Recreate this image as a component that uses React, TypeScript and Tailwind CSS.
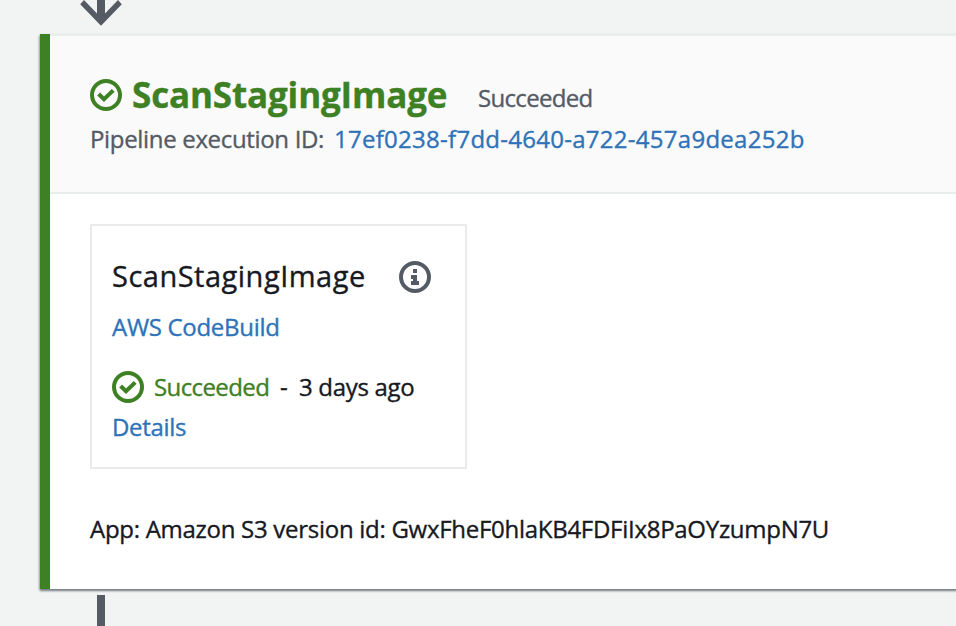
function CheckCircle() {
  return (
    <svg className="h-8 w-8 shrink-0" viewBox="0 0 32 32" fill="none" stroke="#3e8024" strokeWidth="4">
      <circle cx="16" cy="16" r="14" />
      <path d="M8.6 15l5.4 5.3 9.2-8.9" />
    </svg>
  );
}

function InfoCircle() {
  return (
    <svg className="h-8 w-8 shrink-0" viewBox="0 0 32 32">
      <circle cx="16" cy="16" r="14" fill="none" stroke="#545b64" strokeWidth="4" />
      <path d="M14 8h4v4h-4zM12 14h6v6h2v4h-8v-4h2v-2h-2z" fill="#545b64" />
    </svg>
  );
}

function StageHeader() {
  return (
    <header className="h-40 border-y-2 border-[#eaeded] bg-[#fafafa] pt-[37px] pl-10">
      <div className="flex h-11 items-center">
        <CheckCircle />
        <h2 className="ml-2.5 w-[346px] text-[35px] leading-[44px] font-bold tracking-[-0.15px] text-[#3e8024]">
          ScanStagingImage
        </h2>
        <span className="mt-1.5 text-2xl leading-10 tracking-[-0.68px] text-[#545b64]">Succeeded</span>
      </div>
      <div className="mt-0.5 flex text-2xl leading-10">
        <span className="w-[244px] tracking-[-0.33px] text-[#545b64]">Pipeline execution ID:</span>
        <a className="tracking-[0.27px] text-[#2e73b8]">17ef0238-f7dd-4640-a722-457a9dea252b</a>
      </div>
    </header>
  );
}

function ActionCard() {
  return (
    <section className="h-[245px] w-[377px] border-2 border-[#eaeaea] pt-[31px] pl-5 text-2xl leading-10 tracking-[-0.3px]">
      <div className="flex h-10 items-center">
        <h3 className="w-[287px] pb-0.5 text-[29px] leading-[38px] tracking-[0.5px]">ScanStagingImage</h3>
        <InfoCircle />
      </div>
      <a className="mt-2.5 block text-[#2e73b8]">AWS CodeBuild</a>
      <div className="mt-5 flex items-center">
        <CheckCircle />
        <span className="ml-2.5 w-[126px] tracking-[-0.6px] text-[#3e8024]">Succeeded</span>
        <span className="w-[19px]">-</span>
        <span>3 days ago</span>
      </div>
      <a className="block text-[#2e73b8]">Details</a>
    </section>
  );
}

export default function App() {
  return (
    <main className="flex h-[626px] w-[956px] flex-col overflow-hidden bg-[#f2f3f3] font-['Open_Sans',sans-serif] whitespace-nowrap text-[#16191f] [-webkit-text-stroke:0.35px]">
      <svg className="h-[34px] w-[140px] shrink-0" viewBox="0 0 140 34" fill="#545b64">
        <path d="M97 0h8v13.6L118 0l3.8 4.2L101 25.7 80.2 4.2 84 0 97 13.6z" />
      </svg>
      <div className="ml-10 h-[555px] w-[930px] shrink-0 border-l-10 border-[#3e8024] bg-white shadow-[0_2px_2px_0_#545b64b0,-1px_1px_2px_0_#545b6460]">
        <StageHeader />
        <div className="pt-[30px] pl-10">
          <ActionCard />
          <p className="mt-10 text-2xl leading-10 tracking-[-0.28px]">
            App: Amazon S3 version id: GwxFheF0hlaKB4FDFiIx8PaOYzumpN7U
          </p>
        </div>
      </div>
      <div className="mt-1.5 ml-[97px] h-[31px] w-2 bg-[#545b64]" />
    </main>
  );
}
